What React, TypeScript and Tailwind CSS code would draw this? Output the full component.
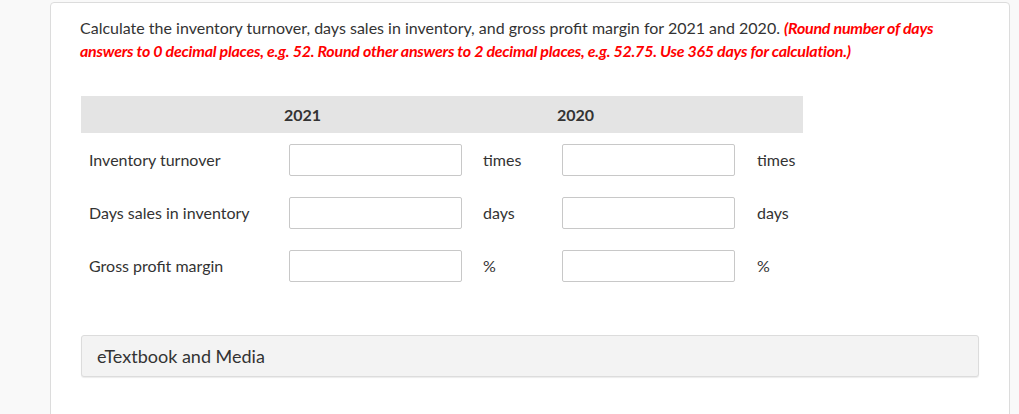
export default function App() {
  const rows = [
    { label: "Inventory turnover", unit: "times" },
    { label: "Days sales in inventory", unit: "days" },
    { label: "Gross profit margin", unit: "%" },
  ];
  return (
    <div
      className="min-h-[414px] w-[1019px] bg-[#f9f9f9] pt-[2px] pl-[50px] text-[#333]"
      style={{ fontFamily: "Lato, 'Open Sans', sans-serif" }}
    >
      <div className="h-[420px] w-[960px] rounded-[4px] border border-[#dcdcdc] bg-white pt-[13px] pl-[29px]">
        <p className="w-[870px] text-[16px] leading-[23px]">
          Calculate the inventory turnover, days sales in inventory, and gross profit margin for 2021 and 2020.{" "}
          <span className="font-bold italic text-[#ff0000] tracking-[-0.25px]">
            (Round number of days answers to 0 decimal places, e.g. 52. Round other answers to 2 decimal places, e.g. 52.75. Use 365 days for calculation.)
          </span>
        </p>
        <div className="mt-[34px] ml-px w-[722px]">
          <div className="flex h-[37px] items-center bg-[#e4e4e4] text-[16px] font-bold text-[#333]">
            <div className="w-[203px]" />
            <div className="w-[273px]">2021</div>
            <div>2020</div>
          </div>
          {rows.map((r) => (
            <div key={r.label} className="flex h-[53px] items-center text-[16px]">
              <div className="w-[208px] pl-[8px]">{r.label}</div>
              <div className="h-[32px] w-[173px] rounded-[2px] border border-[#c8c8c8] bg-white" />
              <div className="w-[100px] pl-[21px]">{r.unit}</div>
              <div className="h-[32px] w-[173px] rounded-[2px] border border-[#c8c8c8] bg-white" />
              <div className="pl-[22px]">{r.unit}</div>
            </div>
          ))}
        </div>
        <div className="mt-[43px] ml-px flex h-[42px] w-[898px] items-center rounded-[3px] border border-[#dcdcdc] bg-[#f3f3f3] pl-[15px] text-[18px] text-[#333] shadow-[0_1px_1px_rgba(0,0,0,0.08)]">
          eTextbook and Media
        </div>
      </div>
    </div>
  );
}
